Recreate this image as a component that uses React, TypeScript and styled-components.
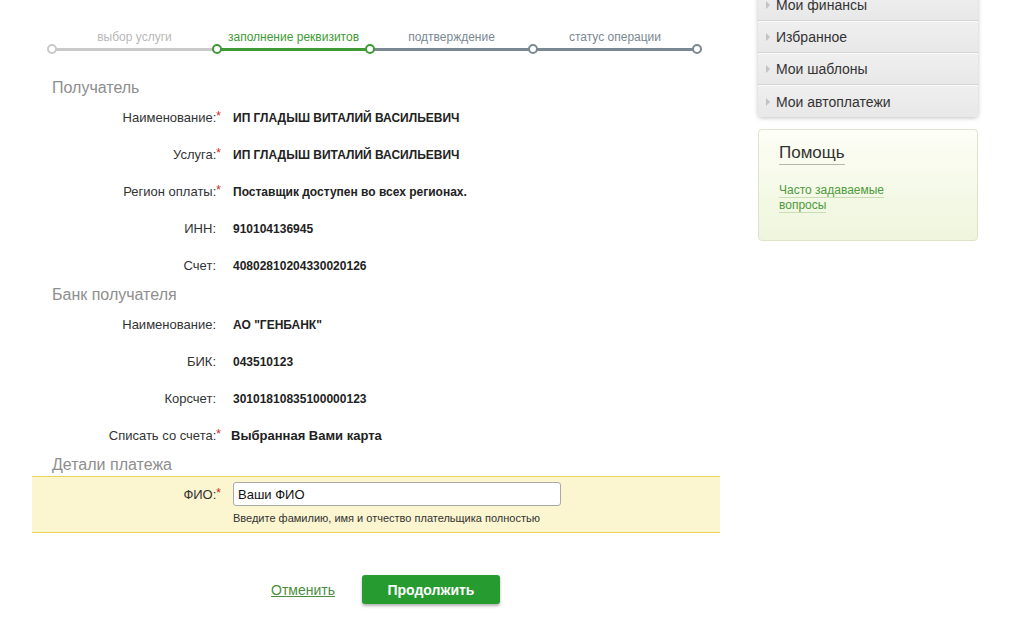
import React, {FC} from 'react';
import styled, {createGlobalStyle} from 'styled-components';

const GlobalStyle = createGlobalStyle`
  body {
    margin: 0;
    background: #fff;
    font-family: 'Liberation Sans', Arial, sans-serif;
    color: #333;
  }
`;

const Page = styled.div`
  display: flex;
  align-items: flex-start;
  width: 1017px;
  height: 619px;
  overflow: hidden;
`;

const Main = styled.main`
  margin-left: 32px;
  width: 688px;
`;

/* ---------- stepper ---------- */

const Stepper = styled.div`
  display: grid;
  grid-template-columns: 165px 153px 163px 164px;
  margin: 30px 0 0 20px;
  position: relative;
`;

const Step = styled.div`
  position: relative;
`;

const StepLabel = styled.div<{$tone: string}>`
  font-size: 12px;
  line-height: 14px;
  height: 14px;
  text-align: center;
  color: ${(p) => p.$tone};
`;

const StepLine = styled.div<{$tone: string}>`
  margin-top: 4px;
  height: 3px;
  background: ${(p) => p.$tone};
`;

const Dot = styled.span<{$tone: string; $end?: boolean}>`
  position: absolute;
  top: 14px;
  ${(p) => (p.$end ? 'right: -5px;' : 'left: -5px;')}
  width: 6px;
  height: 6px;
  border: 2px solid ${(p) => p.$tone};
  border-radius: 50%;
  background: #fff;
  z-index: 1;
`;

const LIGHT = '#c9c9c9';
const GREEN = '#3e9a35';
const SLATE = '#7a8891';

const steps = [
  {label: 'выбор услуги', text: '#b8b8b8', line: LIGHT, dot: LIGHT},
  {label: 'заполнение реквизитов', text: GREEN, line: GREEN, dot: GREEN},
  {label: 'подтверждение', text: SLATE, line: SLATE, dot: GREEN},
  {label: 'статус операции', text: SLATE, line: SLATE, dot: SLATE},
];

/* ---------- form ---------- */

const SectionTitle = styled.h2<{$first?: boolean}>`
  margin: ${(p) => (p.$first ? '26px' : '0')} 0 0 20px;
  font-size: 16px;
  font-weight: normal;
  line-height: 22px;
  color: #8e8e8e;
`;

const Row = styled.div`
  display: grid;
  grid-template-columns: 189px 1fr;
  column-gap: 12px;
  align-items: center;
  height: 37px;
`;

const Label = styled.div<{$required?: boolean}>`
  text-align: right;
  font-size: 13px;
  color: #333;
  padding-right: ${(p) => (p.$required ? '0' : '5px')};
  white-space: nowrap;
`;

const Star = styled.sup`
  color: #d42020;
  font-size: 12px;
  vertical-align: 2px;
  line-height: 0;
`;

const Value = styled.div<{$big?: boolean}>`
  font-size: ${(p) => (p.$big ? '13px' : '12px')};
  font-weight: bold;
  color: #222;
  margin-left: ${(p) => (p.$big ? '-2px' : '0')};
`;

const Band = styled.div`
  background: #fbf5d0;
  border-top: 1px solid #ecd25a;
  border-bottom: 1px solid #ecd25a;
  padding: 5px 0 7px;
  display: grid;
  grid-template-columns: 189px 1fr;
  column-gap: 12px;
`;

const BandLabel = styled(Label)`
  padding-top: 5px;
`;

const Field = styled.input`
  box-sizing: border-box;
  width: 328px;
  height: 24px;
  border: 1px solid #a9a9a9;
  border-radius: 3px;
  padding: 0 4px;
  font-family: 'Liberation Sans', Arial, sans-serif;
  font-size: 13px;
  color: #111;
  background: #fff;
  outline: none;
`;

const Hint = styled.div`
  margin-top: 6px;
  font-size: 11px;
  line-height: 13px;
  color: #333;
`;

const Actions = styled.div`
  display: flex;
  align-items: center;
  margin: 42px 0 0 239px;
  gap: 27px;
`;

const CancelLink = styled.a`
  font-size: 14px;
  color: #4b8f3c;
  text-decoration: underline;
  cursor: pointer;
`;

const PrimaryButton = styled.button`
  width: 138px;
  height: 29px;
  border: none;
  border-radius: 3px;
  background: #259b30;
  color: #fff;
  font-family: 'Liberation Sans', Arial, sans-serif;
  font-size: 14px;
  font-weight: bold;
  box-shadow: 0 2px 3px rgba(0, 0, 0, 0.3);
  cursor: pointer;
`;

/* ---------- sidebar ---------- */

const Sidebar = styled.aside`
  margin-left: 38px;
  width: 220px;
`;

const Menu = styled.ul`
  list-style: none;
  margin: -11px 0 0;
  padding: 0;
  border-radius: 0 0 4px 4px;
  box-shadow: 0 1px 4px rgba(0, 0, 0, 0.25);
  overflow: hidden;
`;

const MenuItem = styled.li`
  display: flex;
  align-items: center;
  gap: 6px;
  height: 30px;
  padding-left: 8px;
  background: linear-gradient(#efefef, #e8e8e8);
  border-top: 1px solid #fafafa;
  border-bottom: 1px solid #d4d4d4;
  font-size: 14px;
  color: #333;

  &:last-child {
    border-bottom: none;
    height: 31px;
  }
`;

const Arrow = styled.span`
  width: 0;
  height: 0;
  border-top: 4px solid transparent;
  border-bottom: 4px solid transparent;
  border-left: 4px solid #c2c2c2;
`;

const HelpBox = styled.section`
  margin-top: 12px;
  box-sizing: border-box;
  height: 112px;
  padding: 12px 20px;
  border: 1px solid #dfe3cc;
  border-radius: 4px;
  background: linear-gradient(#fdfef6, #eef5dc);
`;

const HelpTitle = styled.h3`
  display: inline-block;
  margin: 0;
  font-size: 17px;
  font-weight: normal;
  line-height: 22px;
  color: #333;
  border-bottom: 1px solid #b8b8a8;
`;

const HelpLink = styled.a`
  display: block;
  margin-top: 18px;
  width: 110px;
  font-size: 12px;
  line-height: 15px;
  color: #4e9a3c;
  text-decoration: none;

  span {
    border-bottom: 1px solid #c9dcb4;
  }
`;

interface InfoRowProps {
  label: string;
  value: string;
  required?: boolean;
  big?: boolean;
}

const InfoRow: FC<InfoRowProps> = ({label, value, required, big}) => (
  <Row>
    <Label $required={required}>
      {label}:{required && <Star>*</Star>}
    </Label>
    <Value $big={big}>{value}</Value>
  </Row>
);

const App: FC = () => {
  return (
    <Page>
      <GlobalStyle />
      <Main>
        <Stepper>
          {steps.map((s, i) => (
            <Step key={s.label}>
              <StepLabel $tone={s.text}>{s.label}</StepLabel>
              <StepLine $tone={s.line} />
              <Dot $tone={s.dot} />
              {i === steps.length - 1 && <Dot $tone={SLATE} $end />}
            </Step>
          ))}
        </Stepper>

        <SectionTitle $first>Получатель</SectionTitle>
        <InfoRow label="Наименование" value="ИП ГЛАДЫШ ВИТАЛИЙ ВАСИЛЬЕВИЧ" required />
        <InfoRow label="Услуга" value="ИП ГЛАДЫШ ВИТАЛИЙ ВАСИЛЬЕВИЧ" required />
        <InfoRow label="Регион оплаты" value="Поставщик доступен во всех регионах." required />
        <InfoRow label="ИНН" value="910104136945" />
        <InfoRow label="Счет" value="40802810204330020126" />

        <SectionTitle>Банк получателя</SectionTitle>
        <InfoRow label="Наименование" value='АО "ГЕНБАНК"' />
        <InfoRow label="БИК" value="043510123" />
        <InfoRow label="Корсчет" value="30101810835100000123" />
        <InfoRow label="Списать со счета" value="Выбранная Вами карта" required big />

        <SectionTitle>Детали платежа</SectionTitle>
        <Band>
          <BandLabel $required>
            ФИО:<Star>*</Star>
          </BandLabel>
          <div>
            <Field defaultValue="Ваши ФИО" />
            <Hint>Введите фамилию, имя и отчество плательщика полностью</Hint>
          </div>
        </Band>

        <Actions>
          <CancelLink>Отменить</CancelLink>
          <PrimaryButton>Продолжить</PrimaryButton>
        </Actions>
      </Main>

      <Sidebar>
        <Menu>
          {['Мои финансы', 'Избранное', 'Мои шаблоны', 'Мои автоплатежи'].map((item) => (
            <MenuItem key={item}>
              <Arrow />
              {item}
            </MenuItem>
          ))}
        </Menu>
        <HelpBox>
          <HelpTitle>Помощь</HelpTitle>
          <HelpLink>
            <span>Часто задаваемые</span> <span>вопросы</span>
          </HelpLink>
        </HelpBox>
      </Sidebar>
    </Page>
  );
};

export default App;
